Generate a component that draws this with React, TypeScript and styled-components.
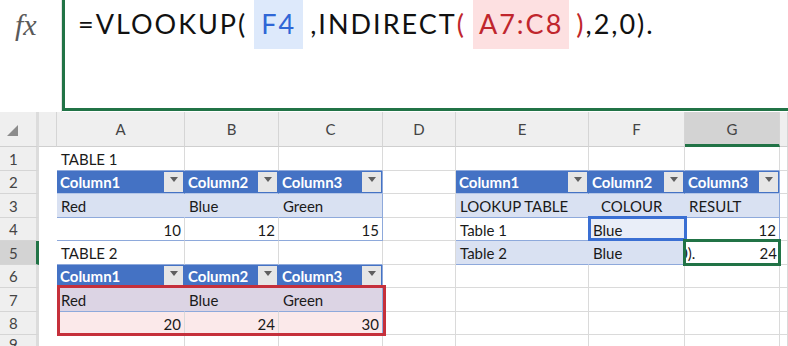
import React from 'react';
import styled, { createGlobalStyle } from 'styled-components';

const GlobalStyle = createGlobalStyle`
  html, body { margin: 0; padding: 0; background: #fff; }
  body { font-family: Lato, "Liberation Sans", sans-serif; overflow: hidden; }
`;

const COLS = ['A', 'B', 'C', 'D', 'E', 'F', 'G', 'H'];
const ROWS = [1, 2, 3, 4, 5, 6, 7, 8, 9];

const HEAD_BLUE = '#4472c4';
const BAND = '#d9e1f2';
const TABLE_LINE = '#8ea9db';
const GRID_LINE = '#dadada';
const EXCEL_GREEN = '#217346';

type Table = { c0: number; c1: number; head: number; last: number };
const TABLES: Table[] = [
  { c0: 0, c1: 2, head: 2, last: 4 },
  { c0: 0, c1: 2, head: 6, last: 8 },
  { c0: 4, c1: 6, head: 2, last: 5 },
];

type Content = { text: string; align?: 'left' | 'right'; indent?: number };
const CONTENT: Record<string, Content> = {
  A1: { text: 'TABLE 1' },
  A3: { text: 'Red' }, B3: { text: 'Blue' }, C3: { text: 'Green' },
  A4: { text: '10', align: 'right' }, B4: { text: '12', align: 'right' }, C4: { text: '15', align: 'right' },
  A5: { text: 'TABLE 2' },
  A7: { text: 'Red' }, B7: { text: 'Blue' }, C7: { text: 'Green' },
  A8: { text: '20', align: 'right' }, B8: { text: '24', align: 'right' }, C8: { text: '30', align: 'right' },
  E3: { text: 'LOOKUP TABLE' }, F3: { text: 'COLOUR', indent: 8 }, G3: { text: 'RESULT' },
  E4: { text: 'Table 1' }, F4: { text: 'Blue' }, G4: { text: '12', align: 'right' },
  E5: { text: 'Table 2' }, F5: { text: 'Blue' },
};

const FILL_OVERRIDE: Record<string, string> = {
  A7: '#dcd4e4', B7: '#dcd4e4', C7: '#dcd4e4',
  A8: '#fbe9ea', B8: '#fbe9ea', C8: '#fbe9ea',
  F4: '#e9eef8',
  G5: '#ffffff',
};

const Page = styled.div`
  width: 788px;
  height: 346px;
  overflow: hidden;
  background: #fff;
`;

const FormulaBar = styled.div`
  display: flex;
  height: 112px;
`;

const FxBox = styled.div`
  width: 62px;
  box-sizing: border-box;
  border-right: 1px solid #e4e4e4;
  padding: 8px 0 0 15px;
  font-family: "Liberation Serif", serif;
  font-style: italic;
  font-size: 30px;
  color: #5a5a5a;
`;

const FormulaInput = styled.div`
  flex: 1;
  height: 111px;
  box-sizing: border-box;
  border-left: 3px solid ${EXCEL_GREEN};
  border-bottom: 3px solid ${EXCEL_GREEN};
  padding-left: 13px;
  display: flex;
  align-items: flex-start;
  font-size: 27px;
  letter-spacing: 2px;
  white-space: pre;
  color: #111;
`;

const Token = styled.span<{ $color?: string; $bg?: string; $pad?: number }>`
  display: inline-block;
  height: 49px;
  line-height: 47px;
  color: ${p => p.$color ?? '#111'};
  background: ${p => p.$bg ?? 'transparent'};
  padding: 0 ${p => p.$pad ?? 0}px;
  margin: 0 ${p => (p.$bg ? 7 : 0)}px;
`;

const Sheet = styled.div`
  display: grid;
  grid-template-columns: 39px 18px 128px 94px 104px 73px 133px 96px 95px 1fr;
  grid-template-rows: 35px 24px 23px 24px 23px 24px 23px 24px 23px 1fr;
  height: 234px;
  font-size: 15px;
  color: #1a1a1a;
`;

const Placed = styled.div<{ $r: number; $c: number }>`
  grid-row: ${p => p.$r};
  grid-column: ${p => p.$c};
  box-sizing: border-box;
  min-width: 0;
`;

const Corner = styled(Placed)`
  background: #efefef;
  border-bottom: 1px solid #cfcfcf;
  border-right: 3px solid #dcdcdc;
  display: flex;
  align-items: flex-end;
  padding: 0 0 10px 7px;
`;

const HeaderGutter = styled(Placed)`
  background: #efefef;
  border-bottom: 1px solid #cfcfcf;
  border-right: 1px solid #d5d5d5;
`;

const ColHeader = styled(Placed)<{ $sel?: boolean }>`
  background: ${p => (p.$sel ? '#d3d3d3' : '#efefef')};
  border-right: 1px solid #d5d5d5;
  border-bottom: ${p => (p.$sel ? `3px solid ${EXCEL_GREEN}` : '1px solid #cfcfcf')};
  display: flex;
  align-items: center;
  justify-content: center;
  padding-top: ${p => (p.$sel ? '2px' : '0')};
  color: #444;
  font-size: 15px;
`;

const RowHeader = styled(Placed)<{ $sel?: boolean }>`
  background: ${p => (p.$sel ? '#d3d3d3' : '#efefef')};
  border-bottom: 1px solid #d5d5d5;
  border-right: 3px solid ${p => (p.$sel ? EXCEL_GREEN : '#dcdcdc')};
  display: flex;
  align-items: center;
  padding-left: 9px;
  color: #444;
  font-size: 15px;
`;

const Gutter = styled(Placed)`
  background: #fff;
`;

const Cell = styled(Placed)<{ $fill: string; $right: string; $bottom: string; $align: string; $indent: number }>`
  background: ${p => p.$fill};
  border-right: 1px solid ${p => p.$right};
  border-bottom: 1px solid ${p => p.$bottom};
  display: flex;
  align-items: center;
  justify-content: ${p => (p.$align === 'right' ? 'flex-end' : 'flex-start')};
  padding: 1px 3px 0 ${p => 4 + p.$indent}px;
  white-space: nowrap;
  overflow: hidden;
`;

const TableHead = styled(Placed)<{ $edge: string }>`
  background: ${HEAD_BLUE};
  border-right: 1px solid ${p => p.$edge};
  border-bottom: 1px solid #b4c6e7;
  display: flex;
  align-items: center;
  justify-content: space-between;
  padding-left: 3px;
  color: #fff;
  font-weight: 700;
  white-space: nowrap;
  overflow: hidden;
`;

const FilterButton = styled.span`
  width: 19px;
  height: 20px;
  margin-right: 1px;
  background: #e6e6e6;
  flex-shrink: 0;
  display: flex;
  align-items: center;
  justify-content: center;

  &::after {
    content: '';
    margin-top: -5px;
    border-left: 4px solid transparent;
    border-right: 4px solid transparent;
    border-top: 5px solid #5f5f5f;
  }
`;

const EditCell = styled(Placed)`
  background: #fff;
  border-bottom: 1px solid ${GRID_LINE};
  display: flex;
  align-items: center;
  justify-content: space-between;
  padding: 1px 3px 0 0;
  overflow: hidden;
  white-space: nowrap;
`;

const Spill = styled.span`
  margin-left: -6px;
`;

const RefBox = styled.div<{ $area: string; $inset: string; $color: string }>`
  grid-area: ${p => p.$area};
  margin: ${p => p.$inset};
  border: 3px solid ${p => p.$color};
  pointer-events: none;
  z-index: 2;
`;

const tableOf = (r: number, c: number) => TABLES.find(t => c >= t.c0 && c <= t.c1 && r >= t.head && r <= t.last);
const aboveTable = (r: number, c: number) => TABLES.some(t => c >= t.c0 && c <= t.c1 && r === t.head - 1);

function renderCell(r: number, c: number) {
  const key = `${COLS[c]}${r}`;
  const gr = r + 1;
  const gc = c + 3;
  const t = tableOf(r, c);

  if (t && r === t.head) {
    const edge = c === t.c1 ? TABLE_LINE : HEAD_BLUE;
    return (
      <TableHead key={key} $r={gr} $c={gc} $edge={edge}>
        <span>Column{c - t.c0 + 1}</span>
        <FilterButton />
      </TableHead>
    );
  }

  if (key === 'G5') {
    return (
      <EditCell key={key} $r={gr} $c={gc}>
        <Spill>0).</Spill>
        <span>24</span>
      </EditCell>
    );
  }

  let fill = '#fff';
  let right = GRID_LINE;
  let bottom = GRID_LINE;
  const band = t ? (r - t.head) % 2 === 1 : false;
  if (t) {
    fill = band ? BAND : '#fff';
    right = band ? fill : GRID_LINE;
    if (c === t.c1) right = TABLE_LINE;
    bottom = TABLE_LINE;
  } else if (aboveTable(r, c)) {
    bottom = TABLE_LINE;
  }
  if (FILL_OVERRIDE[key]) {
    fill = FILL_OVERRIDE[key];
    if (band && right !== TABLE_LINE) right = fill;
  }
  const content = CONTENT[key];
  return (
    <Cell
      key={key}
      $r={gr}
      $c={gc}
      $fill={fill}
      $right={right}
      $bottom={bottom}
      $align={content?.align ?? 'left'}
      $indent={content?.indent ?? 0}
    >
      {content?.text}
    </Cell>
  );
}

export default function App() {
  return (
    <Page>
      <GlobalStyle />
      <FormulaBar>
        <FxBox>fx</FxBox>
        <FormulaInput>
          <Token>=VLOOKUP(</Token>
          <Token $color="#2f66d6" $bg="#dde9fb" $pad={7}>F4</Token>
          <Token>,INDIRECT</Token>
          <Token $color="#c0262d">(</Token>
          <Token $color="#c0262d" $bg="#fde0e1" $pad={6}>A7:C8</Token>
          <Token $color="#c0262d">)</Token>
          <Token>,2,0).</Token>
        </FormulaInput>
      </FormulaBar>
      <Sheet>
        <Corner $r={1} $c={1}>
          <svg width="11" height="11" viewBox="0 0 11 11">
            <polygon points="11,0 11,11 0,11" fill="#8c8c8c" />
          </svg>
        </Corner>
        <HeaderGutter $r={1} $c={2} />
        {COLS.map((col, i) => (
          <ColHeader key={col} $r={1} $c={i + 3} $sel={col === 'G'}>
            {col === 'H' ? '' : col}
          </ColHeader>
        ))}
        {ROWS.map(r => (
          <React.Fragment key={r}>
            <RowHeader $r={r + 1} $c={1} $sel={r === 5}>{r}</RowHeader>
            <Gutter $r={r + 1} $c={2} />
            {COLS.map((_, c) => renderCell(r, c))}
          </React.Fragment>
        ))}
        <RefBox $area="8 / 3 / 10 / 6" $inset="-3px -3px -1px 0" $color="#c5303b" />
        <RefBox $area="5 / 8 / 6 / 9" $inset="-2px -2px 0 -1px" $color="#3a6fd3" />
        <RefBox $area="6 / 9 / 7 / 10" $inset="-2px -1px -1px -2px" $color={EXCEL_GREEN} />
      </Sheet>
    </Page>
  );
}
